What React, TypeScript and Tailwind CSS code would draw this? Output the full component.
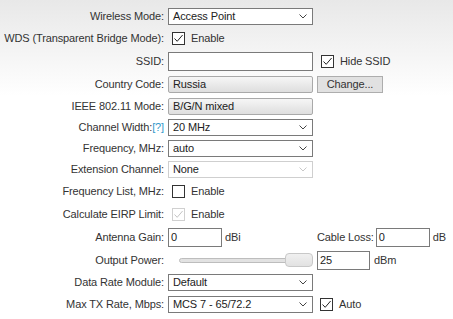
import React from 'react';

function Chevron({ disabled }: { disabled?: boolean }) {
  return (
    <svg width="8" height="5" viewBox="0 0 8 5" className="shrink-0">
      <path d="M0.5 0.5 L4 4 L7.5 0.5" fill="none" stroke={disabled ? '#c8c8c8' : '#444'} strokeWidth="1" />
    </svg>
  );
}

function Select({ value, width = 'w-[145px]', disabled }: { value: string; width?: string; disabled?: boolean }) {
  return (
    <div
      className={`${width} h-[17px] flex items-center justify-between bg-white pl-[4px] pr-[5px] border ${
        disabled ? 'border-[#cfcfcf]' : 'border-[#7a7a7a]'
      }`}
    >
      <span className="leading-none text-[#222]">{value}</span>
      <Chevron disabled={disabled} />
    </div>
  );
}

function Check({ checked, disabled }: { checked?: boolean; disabled?: boolean }) {
  return (
    <div
      className={`w-[13px] h-[13px] shrink-0 bg-white border flex items-center justify-center ${
        disabled ? 'border-[#d0d0d0]' : 'border-[#333]'
      }`}
    >
      {checked && (
        <svg width="11" height="11" viewBox="0 0 11 11">
          <path d="M1.5 5.5 L4.2 8.3 L9.6 2" fill="none" stroke={disabled ? '#c4c4c4' : '#222'} strokeWidth="1" />
        </svg>
      )}
    </div>
  );
}

function TextBox({ value, width, height = 'h-[19px]' }: { value?: string; width: string; height?: string }) {
  return (
    <div className={`${width} ${height} flex items-center bg-white border border-[#7a7a7a] pl-[2px] text-[#222]`}>
      {value}
    </div>
  );
}

function ReadOnly({ value }: { value: string }) {
  return (
    <div className="w-[145px] h-[17px] flex items-center pl-[4px] rounded-[2px] border border-[#a9a9a9] bg-gradient-to-b from-[#f6f6f6] to-[#dedede] text-[#222]">
      {value}
    </div>
  );
}

function Row({ label, h, children }: { label: React.ReactNode; h: string; children?: React.ReactNode }) {
  return (
    <div className={`flex items-center ${h}`}>
      <div className="w-[164px] shrink-0 text-right whitespace-nowrap text-[#333]">{label}</div>
      <div className="ml-[4px] flex items-center">{children}</div>
    </div>
  );
}

export default function App() {
  return (
    <div
      className="w-[453px] h-[319px] overflow-hidden bg-gradient-to-b from-[#e8e8e8] via-white via-[30%] to-white pt-[5px] text-[11px] tracking-[-0.12px]"
      style={{ fontFamily: '"Liberation Sans", Arial, sans-serif' }}
    >
      <Row label="Wireless Mode:" h="h-[22px]">
        <Select value="Access Point" />
      </Row>
      <Row label="WDS (Transparent Bridge Mode):" h="h-[22px]">
        <div className="ml-[4px] flex items-center">
          <Check checked />
          <span className="ml-[6px] text-[#333]">Enable</span>
        </div>
      </Row>
      <Row label="SSID:" h="h-[24px]">
        <TextBox width="w-[145px]" />
        <div className="ml-[8px] flex items-center">
          <Check checked />
          <span className="ml-[6px] text-[#333]">Hide SSID</span>
        </div>
      </Row>
      <Row label="Country Code:" h="h-[22px]">
        <ReadOnly value="Russia" />
        <button className="ml-[4px] w-[66px] h-[17px] flex items-center justify-center bg-[#e1e1e1] border border-[#adadad] text-[#333]">
          Change...
        </button>
      </Row>
      <Row label="IEEE 802.11 Mode:" h="h-[22px]">
        <ReadOnly value="B/G/N mixed" />
      </Row>
      <Row
        label={
          <>
            Channel Width:<span className="text-[#3399cc]">[?]</span>
          </>
        }
        h="h-[20px]"
      >
        <Select value="20 MHz" />
      </Row>
      <Row label="Frequency, MHz:" h="h-[22px]">
        <Select value="auto" />
      </Row>
      <Row label="Extension Channel:" h="h-[20px]">
        <Select value="None" disabled />
      </Row>
      <Row label="Frequency List, MHz:" h="h-[24px]">
        <div className="ml-[4px] flex items-center">
          <Check />
          <span className="ml-[6px] text-[#333]">Enable</span>
        </div>
      </Row>
      <Row label="Calculate EIRP Limit:" h="h-[22px]">
        <div className="ml-[4px] flex items-center">
          <Check checked disabled />
          <span className="ml-[6px] text-[#333]">Enable</span>
        </div>
      </Row>
      <Row label="Antenna Gain:" h="h-[24px]">
        <TextBox value="0" width="w-[54px]" />
        <span className="ml-[3px] w-[92px] text-[#333]">dBi</span>
        <span className="text-[#333]">Cable Loss:</span>
        <div className="ml-[2px]">
          <TextBox value="0" width="w-[54px]" />
        </div>
        <span className="ml-[3px] text-[#333]">dB</span>
      </Row>
      <Row label="Output Power:" h="h-[22px]">
        <div className="relative w-[145px] h-[14px] flex items-center">
          <div className="ml-[11px] w-[120px] h-[5px] rounded-full border border-[#bdbdbd] bg-[#e2e2e2]" />
          <div className="absolute right-0 top-0 w-[28px] h-[14px] rounded-[4px] border border-[#c8c8c8] bg-gradient-to-b from-[#f0f0f0] to-[#e2e2e2]" />
        </div>
        <div className="ml-[4px]">
          <TextBox value="25" width="w-[53px]" />
        </div>
        <span className="ml-[4px] text-[#333]">dBm</span>
      </Row>
      <Row label="Data Rate Module:" h="h-[22px]">
        <Select value="Default" />
      </Row>
      <Row label="Max TX Rate, Mbps:" h="h-[22px]">
        <Select value="MCS 7 - 65/72.2" />
        <div className="ml-[7px] flex items-center">
          <Check checked />
          <span className="ml-[6px] text-[#333]">Auto</span>
        </div>
      </Row>
    </div>
  );
}
